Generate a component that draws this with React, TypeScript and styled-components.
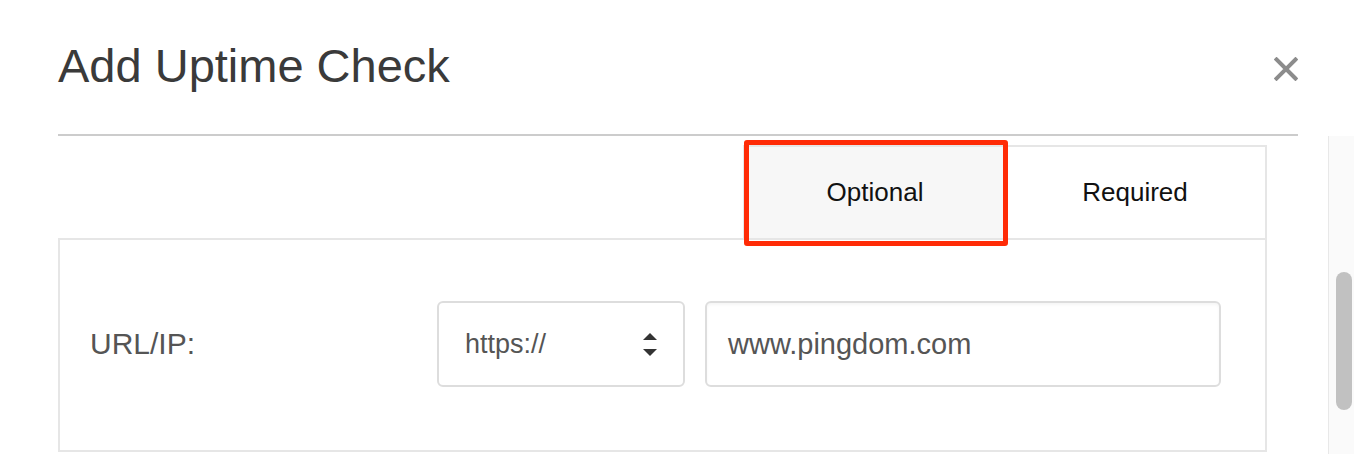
import styled, { createGlobalStyle } from "styled-components";

const GlobalStyle = createGlobalStyle`
  html, body {
    margin: 0;
    padding: 0;
    background: #ffffff;
  }
  body {
    font-family: "Liberation Sans", Arial, Helvetica, sans-serif;
    overflow: hidden;
  }
  * {
    box-sizing: border-box;
  }
`;

const Modal = styled.div`
  width: 1354px;
  height: 454px;
  display: flex;
  flex-direction: column;
  background: #fff;
`;

const Header = styled.header`
  height: 134px;
  padding: 42px 56px 0 58px;
  display: flex;
  justify-content: space-between;
  align-items: flex-start;
`;

const Title = styled.h1`
  margin: 0;
  font-size: 47px;
  line-height: 47px;
  font-weight: 400;
  color: #3a3a3a;
`;

const CloseButton = styled.button`
  margin-top: 15px;
  width: 24px;
  height: 24px;
  padding: 0;
  border: none;
  background: none;
  cursor: pointer;
  display: flex;
`;

const Divider = styled.hr`
  margin: 0 56px 0 58px;
  height: 2px;
  border: none;
  background: #cccccc;
`;

const Body = styled.div`
  flex: 1;
  display: flex;
  min-height: 0;
`;

const Content = styled.div`
  flex: 1;
  padding: 9px 61px 0 58px;
  display: flex;
  flex-direction: column;
`;

const TabBar = styled.div`
  display: flex;
  justify-content: flex-end;
`;

const TabGroup = styled.div`
  display: flex;
  border: 2px solid #e6e6e6;
  border-bottom: none;
`;

const Tab = styled.div<{ $active?: boolean }>`
  position: relative;
  width: 260px;
  height: 91px;
  display: flex;
  align-items: center;
  justify-content: center;
  font-size: 26px;
  color: #111;
  background: ${(p) => (p.$active ? "#f7f7f7" : "#fff")};
  cursor: pointer;

  ${(p) =>
    p.$active &&
    `
    &::after {
      content: "";
      position: absolute;
      top: -7px;
      left: -1px;
      right: -3px;
      bottom: -8px;
      border: 5px solid #ff2b06;
      border-radius: 3px;
      z-index: 2;
      pointer-events: none;
    }
  `}
`;

const Panel = styled.div`
  border: 2px solid #e6e6e6;
  padding: 61px 44px 63px 30px;
  display: flex;
  align-items: center;
`;

const Label = styled.label`
  width: 347px;
  font-size: 30px;
  color: #555;
`;

const SelectBox = styled.div`
  width: 248px;
  height: 86px;
  border: 2px solid #dddddd;
  border-radius: 6px;
  padding: 0 26px 0 26px;
  display: flex;
  align-items: center;
  justify-content: space-between;
  font-size: 27px;
  color: #555;
  background: #fff;
`;

const TextInput = styled.div`
  flex: 1;
  margin-left: 20px;
  height: 86px;
  border: 2px solid #dddddd;
  border-radius: 6px;
  padding: 0 21px;
  display: flex;
  align-items: center;
  font-size: 29px;
  color: #555;
  background: #fff;
  box-shadow: inset 0 2px 3px rgba(0, 0, 0, 0.04);
`;

const ScrollTrack = styled.div`
  width: 26px;
  background: #fafafa;
  border-left: 1px solid #e8e8e8;
  padding: 136px 2px 0 7px;
`;

const ScrollThumb = styled.div`
  width: 16px;
  height: 138px;
  border-radius: 8px;
  background: #c1c1c1;
`;

const CloseIcon = () => (
  <svg width="24" height="24" viewBox="0 0 24 24">
    <path d="M2.5 2.5 L21.5 21.5 M21.5 2.5 L2.5 21.5" stroke="#8c8c8c" strokeWidth="4" strokeLinecap="square" />
  </svg>
);

const SortArrows = () => (
  <svg width="14" height="23" viewBox="0 0 14 23">
    <path d="M7 0 L14 7 L0 7 Z" fill="#333" />
    <path d="M0 16 L14 16 L7 23 Z" fill="#333" />
  </svg>
);

const App = () => {
  return (
    <>
      <GlobalStyle />
      <Modal>
        <Header>
          <Title>Add Uptime Check</Title>
          <CloseButton aria-label="Close">
            <CloseIcon />
          </CloseButton>
        </Header>
        <Divider />
        <Body>
          <Content>
            <TabBar>
              <TabGroup>
                <Tab $active>Optional</Tab>
                <Tab>Required</Tab>
              </TabGroup>
            </TabBar>
            <Panel>
              <Label>URL/IP:</Label>
              <SelectBox>
                <span>https://</span>
                <SortArrows />
              </SelectBox>
              <TextInput>www.pingdom.com</TextInput>
            </Panel>
          </Content>
          <ScrollTrack>
            <ScrollThumb />
          </ScrollTrack>
        </Body>
      </Modal>
    </>
  );
};

export default App;
